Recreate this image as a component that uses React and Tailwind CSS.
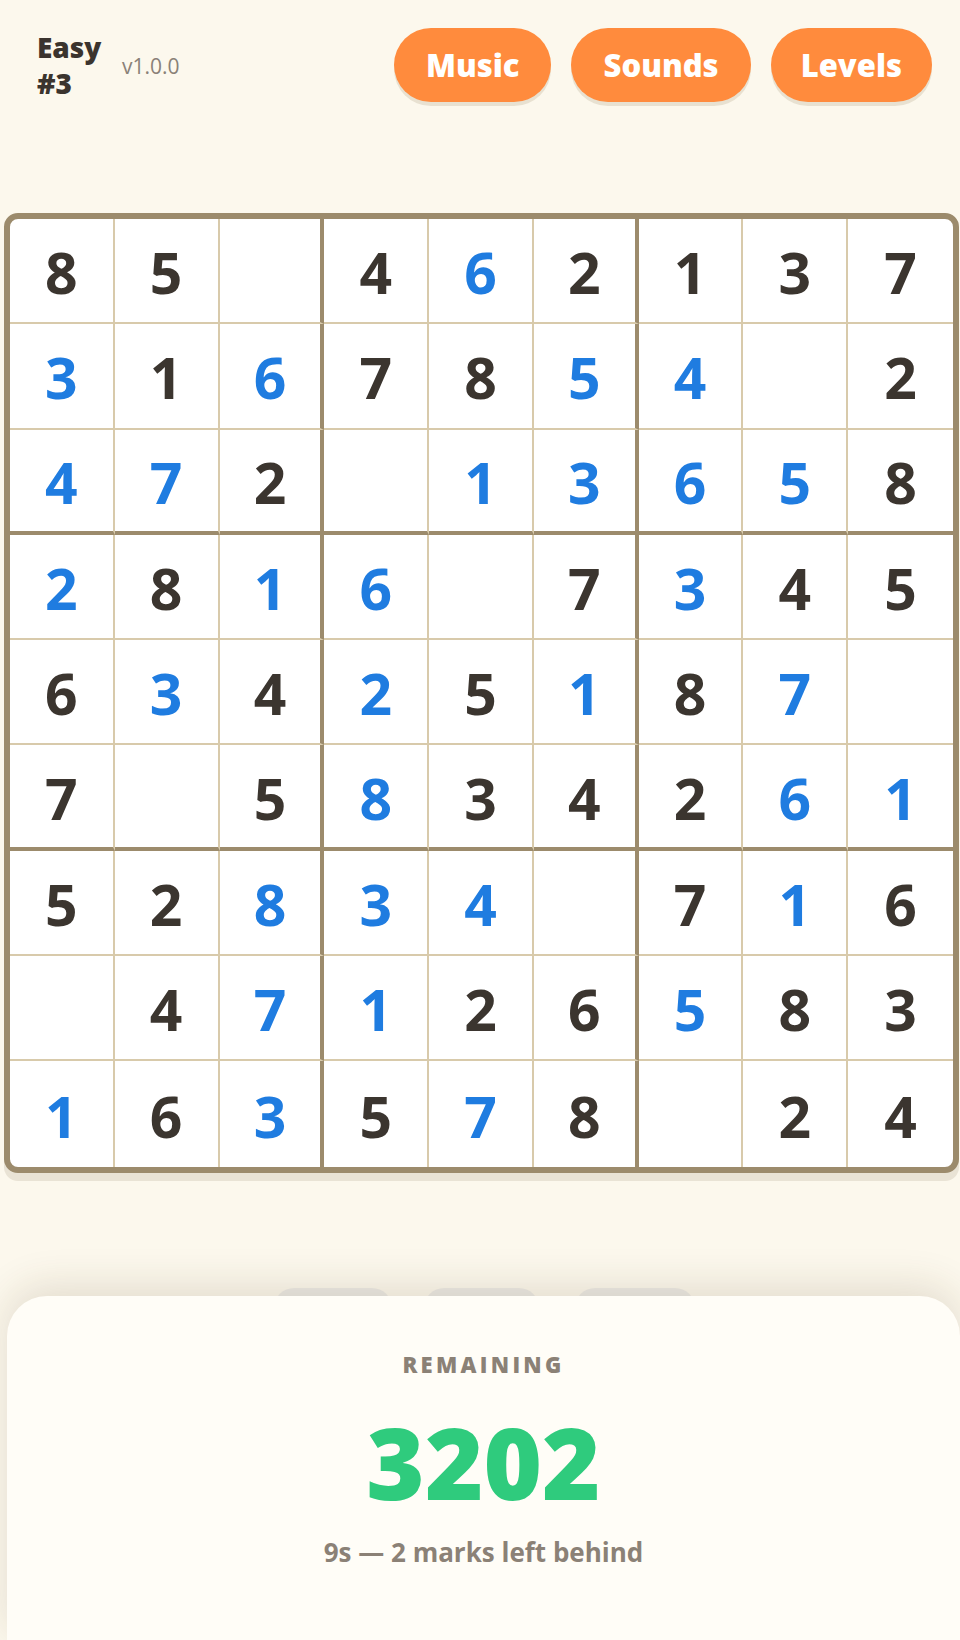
import React from 'react';

// puzzle state: number = given, "b" suffix = user entry (blue), null = empty
const GRID = [
  ['8', '5', null, '4', '6b', '2', '1', '3', '7'],
  ['3b', '1', '6b', '7', '8', '5b', '4b', null, '2'],
  ['4b', '7b', '2', null, '1b', '3b', '6b', '5b', '8'],
  ['2b', '8', '1b', '6b', null, '7', '3b', '4', '5'],
  ['6', '3b', '4', '2b', '5', '1b', '8', '7b', null],
  ['7', null, '5', '8b', '3', '4', '2', '6b', '1b'],
  ['5', '2', '8b', '3b', '4b', null, '7', '1b', '6'],
  [null, '4', '7b', '1b', '2', '6', '5b', '8', '3'],
  ['1b', '6', '3b', '5', '7b', '8', null, '2', '4'],
];

const rightBorder = (c) => {
  if (c === 8) return '';
  if (c === 2 || c === 5) return 'border-r-4 border-r-[#9c8b6c]';
  return 'border-r-2 border-r-[#d8caab]';
};

const bottomBorder = (r) => {
  if (r === 8) return '';
  if (r === 2 || r === 5) return 'border-b-4 border-b-[#9c8b6c]';
  return 'border-b-2 border-b-[#d8caab]';
};

function Cell({ value, r, c }) {
  const user = value && value.endsWith('b');
  const digit = value ? value[0] : '';
  return (
    <div
      className={`h-[105.3px] flex items-center justify-center text-[57px] font-bold leading-none pt-[4px] ${rightBorder(c)} ${bottomBorder(r)} ${
        user ? 'text-[#1f7ce0]' : 'text-[#3b352f]'
      }`}
    >
      {digit}
    </div>
  );
}

function PillButton({ children, className = 'px-[32px]' }) {
  return (
    <button
      type="button"
      className={`h-[74px] ${className} rounded-full bg-[#ff8b3d] text-white text-[31px] font-extrabold shadow-[0_4px_0_#e8e1d1]`}
    >
      {children}
    </button>
  );
}

export default function App() {
  return (
    <div className="min-h-screen flex flex-col bg-[#fcf8ed] font-['Open_Sans',sans-serif] overflow-hidden">
      {/* Header */}
      <div className="flex items-start justify-between pl-[37px] pr-[28px] pt-[28px]">
        <div className="flex items-center pt-[1px]">
          <div className="w-[85px] text-[28px] leading-[36px] font-extrabold text-[#3b342e]">
            Easy
            <br />
            #3
          </div>
          <span className="text-[21px] text-[#8a8178] pt-[4px]">v1.0.0</span>
        </div>
        <div className="flex gap-[20px]">
          <PillButton>Music</PillButton>
          <PillButton>Sounds</PillButton>
          <PillButton className="px-[30px]">Levels</PillButton>
        </div>
      </div>

      {/* Board */}
      <div className="mt-[111px] ml-[4px] w-[955px] rounded-[14px] border-[6px] border-[#9c8b6c] bg-white overflow-hidden shadow-[0_8px_0_#e9e3d5]">
        <div className="grid grid-cols-9">
          {GRID.map((row, r) =>
            row.map((value, c) => <Cell key={`${r}-${c}`} value={value} r={r} c={c} />)
          )}
        </div>
      </div>

      {/* Keys peeking behind the sheet */}
      <div className="mt-[115px] pl-[9px] flex justify-center">
        <div className="w-[118px] h-[20px] rounded-t-[20px] bg-[#eceae5]" />
        <div className="ml-[32px] w-[115px] h-[20px] rounded-t-[20px] bg-[#eceae5]" />
        <div className="ml-[36px] w-[120px] h-[20px] rounded-t-[20px] bg-[#eceae5]" />
      </div>

      {/* Result sheet */}
      <div className="relative z-10 -mt-[12px] ml-[7px] flex-1 rounded-t-[40px] bg-[#fffdf7] shadow-[0_-10px_40px_rgba(80,60,20,0.14)] flex flex-col items-center pt-[52px]">
        <div className="text-[22px] font-extrabold tracking-[0.15em] text-[#8b8176]">REMAINING</div>
        <div className="mt-[30px] text-[100px] leading-none font-extrabold text-[#2fcb7d]">3202</div>
        <div className="mt-[22px] text-[26px] font-bold text-[#8b8176]">9s — 2 marks left behind</div>
      </div>
    </div>
  );
}
